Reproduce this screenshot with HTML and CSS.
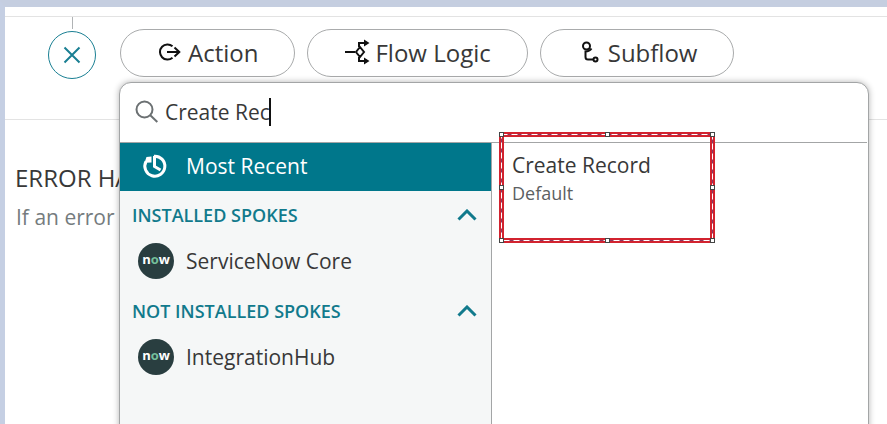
FILE: index.html
```html
<!DOCTYPE html>
<html lang="en">
  <head>
    <meta charset="UTF-8" />
    <meta name="viewport" content="width=device-width, initial-scale=1.0" />
    <title>Flow Designer</title>
    <link rel="stylesheet" href="styles.css">
  </head>
  <body>
    <main class="designer">
      <section class="step">
        <div class="node">
          <span class="connector"></span>
          <button class="close-btn" aria-label="Close">
            <svg width="18" height="18" viewBox="0 0 18 18">
              <path d="M1.5 1.5l15 15M16.5 1.5l-15 15" />
            </svg>
          </button>
        </div>
        <div class="picker">
          <div class="types">
            <button class="type-btn action">
              <svg width="22" height="20" viewBox="0 0 22 20">
                <path d="M13.5 4.2A7.6 7.6 0 1 0 13.5 15.8M8 10h12M15.5 5.5L20.3 10l-4.800 4.500" />
              </svg>
              Action
            </button>
            <button class="type-btn logic">
              <svg width="25" height="26" viewBox="0 0 25 26">
                <path d="M0 13h10M15 8L19 13 15 18 11 13zM14 8V4H21M14 18v4H21" />
                <path class="solid" d="M19 .5l5.500 3.500-5.500 3.500zM19 18.500l5.500 3.500-5.500 3.500z" />
              </svg>
              Flow Logic
            </button>
            <button class="type-btn subflow">
              <svg width="18" height="22" viewBox="0 0 18 22">
                <circle cx="5.500" cy="5" r="3.500" />
                <path d="M10.500 7.500C9 9.800 7.500 10.500 4.500 10.500V16c0 2 .5 2.500 2.500 2.500h5" />
                <circle cx="14.500" cy="18.500" r="2" />
              </svg>
              Subflow
            </button>
          </div>

          <div class="menu">
            <div class="search">
              <svg width="24" height="24" viewBox="0 0 24 24">
                <circle cx="9.500" cy="9.500" r="8" />
                <path d="M15.300 15.300l7 6.700" />
              </svg>
              <input type="text" value="Create Rec" aria-label="Search actions" />
              <span class="caret"></span>
            </div>
            <div class="panes">
              <nav class="spokes">
                <button class="spoke recent">
                  <svg class="history" width="26" height="26" viewBox="0 0 26 26">
                    <path d="M12 3.200A10 10 0 1 1 4 8.500M12.500 3v10.500l6 3.500" />
                    <path class="head" d="M2.500 9.800L4.500 4l5-.5v6z" />
                  </svg>
                  Most Recent
                </button>
                <button class="group">
                  INSTALLED SPOKES
                  <svg width="20" height="12" viewBox="0 0 20 12">
                    <path d="M1.500 10.500L10 2l8.500 8.500" />
                  </svg>
                </button>
                <button class="spoke">
                  <span class="logo">n<i>o</i>w</span>
                  ServiceNow Core
                </button>
                <button class="group">
                  NOT INSTALLED SPOKES
                  <svg width="20" height="12" viewBox="0 0 20 12">
                    <path d="M1.500 10.500L10 2l8.500 8.500" />
                  </svg>
                </button>
                <button class="spoke">
                  <span class="logo">n<i>o</i>w</span>
                  IntegrationHub
                </button>
              </nav>
              <div class="results">
                <button class="result">
                  <span class="result-name">Create Record</span>
                  <span class="result-scope">Default</span>
                </button>
                <div class="marker">
                  <svg width="100%" height="100%">
                    <rect class="band" x=".5" y=".5" width="100%" height="100%" />
                    <rect class="core" x=".5" y=".5" width="100%" height="100%" />
                    <rect class="dash" x=".5" y=".5" width="100%" height="100%" />
                  </svg>
                  <span class="handle top left"></span>
                  <span class="handle top center"></span>
                  <span class="handle top right"></span>
                  <span class="handle middle left"></span>
                  <span class="handle middle right"></span>
                  <span class="handle bottom left"></span>
                  <span class="handle bottom center"></span>
                  <span class="handle bottom right"></span>
                </div>
              </div>
            </div>
          </div>
        </div>
      </section>

      <section class="errors">
        <h2>ERROR HA</h2>
        <p>If an error</p>
      </section>
    </main>
  </body>
</html>
```

FILE: styles.css
```css
* {
  box-sizing: border-box;
}

body {
  margin: 0;
  font-family: "Open Sans", "Noto Sans", sans-serif;
  color: #383838;
  background-color: #fff;
}

button,
input {
  font: inherit;
  color: inherit;
  background: none;
  border: none;
  padding: 0;
  margin: 0;
}

button {
  cursor: pointer;
}

svg {
  flex: none;
  fill: none;
  stroke: currentColor;
}

.designer {
  height: 100vh;
  overflow: hidden;
  border-top: 7px solid #c5cee0;
  border-left: 5px solid #c5cfe3;
  padding-top: 9px;
}

.step {
  display: flex;
  gap: 24px;
  height: 104px;
  padding-left: 43px;
  border-top: 1px solid #e3e3e3;
  border-bottom: 1px solid #e3e3e3;
}

.node {
  display: flex;
  flex-direction: column;
  align-items: center;
  gap: 2px;
}

.connector {
  width: 1px;
  height: 12px;
  background-color: #b0b3b5;
}

.close-btn {
  display: flex;
  align-items: center;
  justify-content: center;
  width: 48px;
  height: 48px;
  border: 1px solid #1a7f93;
  border-radius: 50%;
  color: #1a7f93;
  stroke-width: 2;
}

.picker {
  position: relative;
  flex: 1;
  padding-top: 12px;
}

.types {
  display: flex;
  gap: 12px;
}

.type-btn {
  display: flex;
  align-items: center;
  justify-content: center;
  height: 48px;
  padding-bottom: 2px;
  border: 1px solid #a9abac;
  border-radius: 24px;
  font-size: 24px;
}

.type-btn svg {
  color: #111;
  stroke-width: 2;
}

.type-btn .solid {
  fill: #111;
  stroke: none;
}

.action {
  gap: 7px;
  padding-left: 38px;
  padding-right: 36px;
}

.logic {
  gap: 5px;
  padding-left: 37px;
  padding-right: 36px;
}

.subflow {
  gap: 9px;
  padding-left: 40px;
  padding-right: 36px;
}

/* search menu that opens under the buttons */
.menu {
  position: absolute;
  top: 65px;
  left: -1px;
  right: 18px;
  height: 400px;
  background-color: #fff;
  border: 1px solid #a3a5a6;
  border-radius: 12px;
  box-shadow: 0 0 6px rgba(0, 0, 0, 0.3);
}

.search {
  position: relative;
  display: flex;
  align-items: center;
  gap: 6px;
  height: 60px;
  margin-right: 1px;
  padding: 0 0 2px 15px;
  border-bottom: 1px solid #a3a5a6;
}

.search svg {
  color: #6b7072;
  stroke-width: 2;
}

.search input {
  flex: 1;
  font-size: 21px;
  outline: none;
}

.caret {
  position: absolute;
  top: 15px;
  left: 149px;
  width: 2px;
  height: 28px;
  background-color: #111;
}

.panes {
  display: flex;
  height: 338px;
}

.spokes {
  width: 372px;
  background-color: #f5f7f7;
  border-right: 1px solid #a3a5a6;
  border-radius: 0 0 0 12px;
}

.spoke,
.group {
  display: flex;
  align-items: center;
  width: 100%;
  height: 48px;
}

.spoke {
  gap: 12px;
  padding: 0 0 4px 18px;
  font-size: 21px;
}

.recent {
  gap: 18px;
  padding: 0 0 2px 22px;
  font-weight: 500;
  color: #fff;
  background-color: #00778b;
}

.history {
  stroke-width: 3;
}

.history .head {
  fill: currentColor;
  stroke: none;
}

.group {
  justify-content: space-between;
  padding: 0 14px 0 12px;
  font-size: 18px;
  font-weight: 600;
  color: #117a8c;
}

.group svg {
  stroke-width: 3;
}

.logo {
  width: 36px;
  height: 36px;
  border-radius: 50%;
  background-color: #293e40;
  color: #fff;
  font-size: 13px;
  font-weight: 700;
  line-height: 32px;
  text-align: center;
}

.logo i {
  font-style: normal;
  color: #74bf9b;
}

.results {
  position: relative;
  flex: 1;
  padding: 7px 20px;
}

.result {
  display: flex;
  flex-direction: column;
  align-items: flex-start;
}

.result-name {
  font-size: 21px;
  line-height: 30px;
}

.result-scope {
  font-size: 18px;
  line-height: 26px;
  color: #5c6062;
}

/* selection marker over the first result */
.marker {
  position: absolute;
  top: -9px;
  left: 9px;
  width: 211px;
  height: 106px;
  pointer-events: none;
}

.marker svg {
  display: block;
  overflow: visible;
}

.band {
  stroke: #d2232f;
  stroke-width: 5;
}

.core {
  stroke: #8c3a63;
  stroke-width: 1;
}

.dash {
  stroke: #fff;
  stroke-width: 1;
  stroke-dasharray: 6 4;
}

.handle {
  position: absolute;
  width: 5px;
  height: 5px;
  margin: -2px -3px -3px -2px;
  background-color: #fff;
  border: 1px solid #444;
}

.top {
  top: 0;
}

.middle {
  top: 50%;
}

.bottom {
  bottom: 0;
}

.left {
  left: 0;
}

.center {
  left: 50%;
}

.right {
  right: 0;
}

.errors {
  padding: 40px 10px;
}

.errors h2 {
  margin: 0;
  font-size: 24px;
  font-weight: 400;
  line-height: 36px;
  white-space: nowrap;
}

.errors p {
  margin: 5px 0 0;
  padding-left: 1px;
  font-size: 21px;
  line-height: 32px;
  color: #757c7e;
  white-space: nowrap;
}
```
